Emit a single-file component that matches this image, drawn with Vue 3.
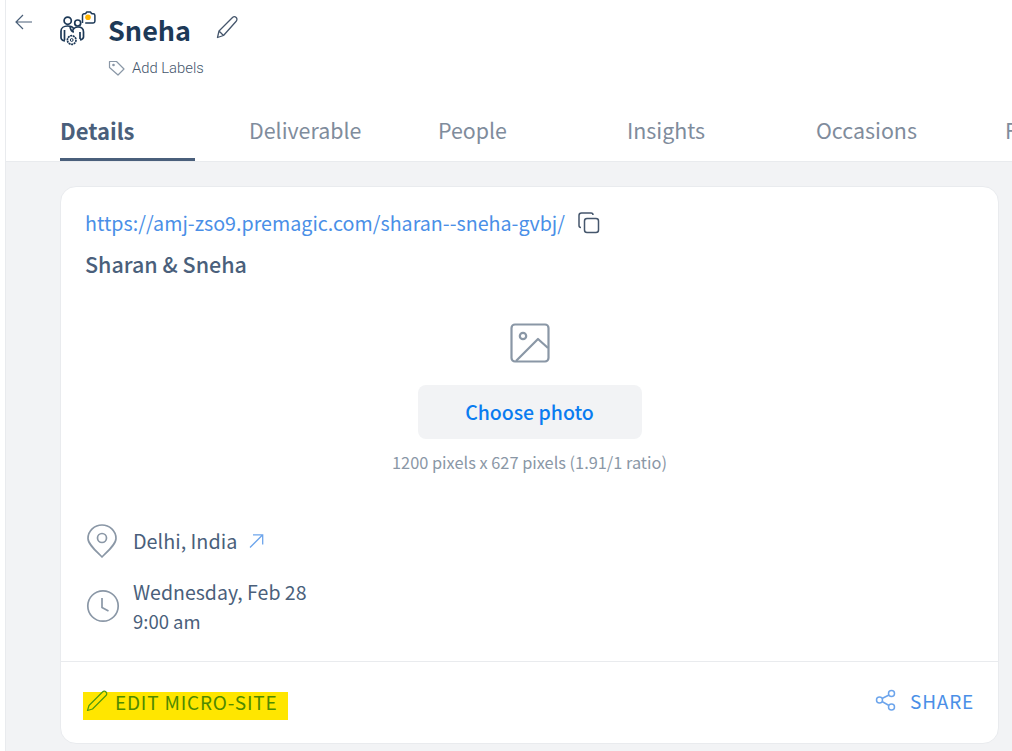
<script setup>
const tabs = ['Details', 'Deliverable', 'People', 'Insights', 'Occasions', 'Files']
</script>

<template>
  <div class="page">
    <header class="head">
      <div class="title-row">
        <button class="back" aria-label="Back">
          <svg width="20" height="20" viewBox="0 0 20 20" fill="none" stroke="#4a5f78" stroke-width="1.2"><path d="M18 10H2.500M9 3l-7 7 7 7"/></svg>
        </button>
        <svg class="logo" width="36" height="38" viewBox="0 0 36 38" fill="none" stroke="#1d3957" stroke-width="1.700" stroke-linejoin="round">
          <circle cx="7.700" cy="10.700" r="3.600"/>
          <circle cx="17.700" cy="13" r="3"/>
          <path d="M5 31c-2.500-.5-4-1.500-4-3.500V21c0-3 3-5 6.500-5s5.500 1 6.500 3"/>
          <path d="M10 17c1 4 3 5 4 5M4.500 20v10"/>
          <path d="M12.500 21c1-3 3-4 5.500-4 3.500 0 5.500 2 5.500 5v5c0 1.500-1.500 2.500-3.500 3M20 22v7"/>
          <circle cx="11.700" cy="30" r="4.300" fill="#fff" stroke-width="1.700" stroke-dasharray="2 .6"/>
          <circle cx="11.700" cy="30" r="1.400" stroke-width="1"/>
          <path d="M22.500 13V5.500c0-1 .7-1.700 1.700-1.700h.8c.8 0 1-.5 1.300-1.200l.3-.6h4l.5 1c.3.5.6.8 1.200.8h.9c1 0 1.700.7 1.700 1.700v5.800c0 1-.7 1.700-1.700 1.700h-8" stroke-width="1.500"/>
          <circle cx="28" cy="7.300" r="2.800" fill="#ffb400" stroke="none"/>
        </svg>
        <h1 class="name">Sneha</h1>
        <svg class="edit-name" width="24" height="24" viewBox="0 0 24 24" fill="none" stroke="#45566c" stroke-width="1.300" stroke-linejoin="round"><path d="M2.500 22.500l1.500-6.500L17.500 2.500c1-1 2.700-1 3.700 0s1 2.700 0 3.700L8.500 20.500 2.500 22.500zM4 16l4.500 4.500"/></svg>
      </div>
      <div class="labels">
        <svg width="18" height="18" viewBox="0 0 18 18" fill="none" stroke="#8a97a6" stroke-width="1.200" stroke-linejoin="round"><path d="M1.500 2.500h7l7.500 7.500-6 6-8.500-7.500z"/><circle cx="5.500" cy="6" r=".7" fill="#8a97a6"/></svg>
        <span>Add Labels</span>
      </div>
      <nav class="tabs">
        <a v-for="(t, i) in tabs" :key="t" class="tab" :class="{ active: i === 0 }">{{ t }}</a>
      </nav>
    </header>

    <main class="body">
      <section class="card">
        <div class="content">
          <div class="url-row">
            <a class="url">https://amj-zso9.premagic.com/sharan--sneha-gvbj/</a>
            <svg width="24" height="24" viewBox="0 0 24 24" fill="none" stroke="#45566c" stroke-width="1.500" stroke-linejoin="round"><rect x="7.500" y="7.500" width="14" height="14" rx="2.500"/><path d="M4 16.500c-1 0-2-1-2-2V4.500C2 3 3 2 4.500 2h9.500c1 0 2 1 2 2"/></svg>
          </div>
          <h2 class="event">Sharan &amp; Sneha</h2>

          <div class="photo">
            <svg width="40" height="40" viewBox="0 0 40 40" fill="none" stroke="#8a97a6" stroke-width="2.200" stroke-linejoin="round"><rect x="1.500" y="1.500" width="37" height="37" rx="3.500"/><circle cx="13" cy="13" r="3.200"/><path d="M6 38l22-22 10 9"/></svg>
            <button class="choose">Choose photo</button>
            <p class="hint">1200 pixels x 627 pixels (1.91/1 ratio)</p>
          </div>

          <div class="place">
            <svg class="pin" width="32" height="36" viewBox="0 0 32 36" fill="none" stroke="#8a97a6" stroke-width="1.700" stroke-linejoin="round"><path d="M16 34C9 27 2 21 2 15.500 2 8 8.500 2 16 2s14 6 14 13.500C30 21 23 27 16 34z"/><circle cx="16" cy="15" r="4.500"/></svg>
            <span class="place-name">Delhi, India</span>
            <svg class="ext" width="16" height="16" viewBox="0 0 16 16" fill="none" stroke="#6da5ec" stroke-width="1.300"><path d="M2 14.500L14.500 2M5 1.800h9.700v9.700"/></svg>
          </div>

          <div class="when">
            <svg class="clock" width="34" height="34" viewBox="0 0 34 34" fill="none" stroke="#8a97a6" stroke-width="1.700"><circle cx="17" cy="17" r="15.200"/><path d="M16 9v9.500l6.500 3.500"/></svg>
            <div class="when-text">
              <div class="date">Wednesday, Feb 28</div>
              <div class="time">9:00 am</div>
            </div>
          </div>
        </div>

        <footer class="foot">
          <a class="edit">
            <svg width="24" height="24" viewBox="0 0 24 24" fill="none" stroke="#4f9a10" stroke-width="1.200" stroke-linejoin="round"><path d="M2.500 21.500l1.500-5L17.500 3c1-1 2.500-1 3.500 0s1 2.500 0 3.500L7.500 20z"/></svg>
            <span>EDIT MICRO-SITE</span>
          </a>
          <a class="share">
            <svg width="22" height="22" viewBox="0 0 22 22" fill="none" stroke="#6da5ec" stroke-width="1.500"><circle cx="16.500" cy="4.500" r="3"/><circle cx="4.500" cy="11" r="3"/><circle cx="16.500" cy="18" r="3"/><path d="M7 9.500l7-3.500M7 12.500l7 4"/></svg>
            <span>SHARE</span>
          </a>
        </footer>
      </section>
    </main>
  </div>
</template>

<style>
html, body { margin: 0; overflow: hidden; background: #fff; }
</style>

<style scoped>
.page {
  width: 1012px;
  height: 751px;
  box-sizing: border-box;
  margin-left: 5px;
  border-left: 1px solid #e9ebee;
  font-family: "Noto Sans CJK SC", "Noto Sans", sans-serif;
  background: #f2f3f5;
  overflow: hidden;
  display: flex;
  flex-direction: column;
}
.head {
  background: #fff;
  height: 162px;
  box-sizing: border-box;
  border-bottom: 1px solid #e9ebee;
  flex: none;
}
.title-row {
  display: flex;
  align-items: center;
  height: 50px;
  padding-top: 4px;
}
.back {
  all: unset;
  display: flex;
  margin: -14px 0 0 8px;
  width: 20px;
  height: 20px;
}
.logo { margin-left: 26px; }
.name {
  margin: 2px 0 0 12px;
  font-size: 27px;
  line-height: 36px;
  font-weight: 700;
  color: #1d3957;
}
.edit-name { margin: -4px 0 0 24px; }
.labels {
  display: flex;
  align-items: center;
  gap: 6px;
  margin: 2px 0 0 102px;
  height: 24px;
  font-family: Roboto, sans-serif;
  font-size: 14.800px;
  font-weight: 300;
  color: #45566c;
}
.tabs {
  display: flex;
  gap: 54px;
  margin: 34px 0 0 54px;
}
.tab {
  flex: none;
  width: 135px;
  height: 47px;
  line-height: 32px;
  font-size: 21.400px;
  color: #7f8c9c;
  white-space: nowrap;
  box-sizing: border-box;
}
.tab.active {
  color: #4a5f7b;
  font-size: 22px;
  font-weight: 700;
  border-bottom: 3px solid #4a5f7b;
}
.body {
  padding: 24px 0 0 54px;
}
.card {
  width: 939px;
  height: 558px;
  box-sizing: border-box;
  background: #fff;
  border: 1px solid #e9ebee;
  border-radius: 16px;
  display: flex;
  flex-direction: column;
}
.content { flex: 1; padding: 0 24px; }
.url-row {
  display: flex;
  align-items: center;
  gap: 12px;
  height: 24px;
  margin-top: 24px;
}
.url {
  font-size: 19.680px;
  line-height: 24px;
  color: #4a8fe7;
}
.event {
  margin: 13px 0 0;
  font-size: 21.500px;
  line-height: 32px;
  font-weight: 500;
  color: #4a5f7b;
}
.photo {
  display: flex;
  flex-direction: column;
  align-items: center;
  margin-top: 43px;
}
.choose {
  all: unset;
  width: 224px;
  height: 54px;
  margin-top: 22px;
  border-radius: 8px;
  background: #f2f3f5;
  color: #0a7cf0;
  font-size: 19.500px;
  font-weight: 500;
  text-align: center;
  line-height: 52px;
}
.hint {
  margin: 12px 0 0;
  font-size: 16.350px;
  line-height: 22px;
  color: #8a97a6;
}
.place {
  display: flex;
  align-items: center;
  margin-top: 50px;
  height: 36px;
}
.pin { margin-left: 1px; }
.place-name {
  margin-left: 15px;
  font-size: 19.800px;
  line-height: 24px;
  color: #4a5f7b;
}
.ext { margin-left: 11px; }
.when {
  display: flex;
  align-items: center;
  margin-top: 18px;
}
.clock { margin-left: 1px; }
.when-text {
  margin-left: 13px;
  color: #4a5f7b;
  line-height: 30px;
}
.date { font-size: 19.500px; }
.time { font-size: 18.500px; line-height: 28px; }
.foot {
  flex: none;
  height: 82px;
  box-sizing: border-box;
  border-top: 1px solid #e9ebee;
  display: flex;
  align-items: center;
  justify-content: space-between;
  padding: 0 24px 0 22px;
}
.edit {
  display: flex;
  align-items: flex-start;
  gap: 6px;
  height: 28px;
  width: 205px;
  margin-top: 6px;
  padding-left: 2px;
  box-sizing: border-box;
  background: #ffe600;
  color: #4f8a00;
  font-size: 19px;
  line-height: 20px;
  letter-spacing: .8px;
  white-space: nowrap;
}
.edit svg { margin-top: -3px; }
.share {
  display: flex;
  align-items: center;
  gap: 13px;
  margin-top: -5px;
  color: #4a8fe7;
  font-size: 19px;
  letter-spacing: .8px;
}
</style>
